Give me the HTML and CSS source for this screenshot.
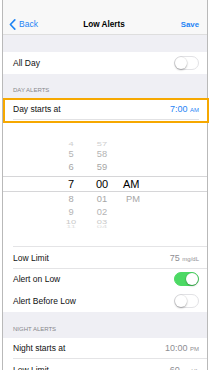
FILE: index.html
```html
<!DOCTYPE html>
<html>
<head>
<meta charset="utf-8">
<link rel="stylesheet" href="styles.css">
</head>
<body>
<div class="screen">
  <div class="nav">
    <div class="back">
      <svg class="chev" width="7" height="11" viewBox="0 0 7 11"><path d="M5.8 0.9 L1.4 5.5 L5.8 10.1" fill="none" stroke="#1f84f5" stroke-width="1.6" stroke-linecap="round" stroke-linejoin="round"/></svg>
      <span>Back</span>
    </div>
    <div class="title">Low Alerts</div>
    <div class="save">Save</div>
  </div>
  <div class="spacer"></div>
  <div class="row">
    <span>All Day</span>
    <span class="toggle"><span class="knob"></span></span>
  </div>
  <div class="section day">DAY ALERTS</div>
  <div class="row hl">
    <span>Day starts at</span>
    <span class="val blue">7:00 <span class="unit">AM</span></span>
  </div>
  <div class="picker">
    <div class="prow r4"><span>4</span><span>57</span><span></span></div>
    <div class="prow r5"><span>5</span><span>58</span><span></span></div>
    <div class="prow r6"><span>6</span><span>59</span><span></span></div>
    <div class="prow sel"><span>7</span><span>00</span><span class="ampm">AM</span></div>
    <div class="prow r8"><span>8</span><span>01</span><span class="ampm pm">PM</span></div>
    <div class="prow r9"><span>9</span><span>02</span><span></span></div>
    <div class="prow r10"><span>10</span><span>03</span><span></span></div>
    <div class="prow r11"><span>11</span><span>04</span><span></span></div>
  </div>
  <div class="group">
    <div class="line"></div>
    <div class="row h21">
      <span>Low Limit</span>
      <span class="val">75 <span class="unit">mg/dL</span></span>
    </div>
    <div class="line"></div>
    <div class="row h20">
      <span>Alert on Low</span>
      <span class="toggle on"><span class="knob"></span></span>
    </div>
    <div class="row h23">
      <span>Alert Before Low</span>
      <span class="toggle"><span class="knob"></span></span>
    </div>
  </div>
  <div class="section night">NIGHT ALERTS</div>
  <div class="group">
    <div class="row h20">
      <span>Night starts at</span>
      <span class="val">10:00 <span class="unit">PM</span></span>
    </div>
    <div class="line"></div>
    <div class="row">
      <span>Low Limit</span>
      <span class="val">60 <span class="unit">mg/dL</span></span>
    </div>
  </div>
</div>
</body>
</html>
```

FILE: styles.css
```css
html, body {
  margin: 0;
  padding: 0;
}
body {
  width: 211px;
  height: 370px;
  overflow: hidden;
  background: #fff;
  font-family: "Liberation Sans", Arial, sans-serif;
}
.screen {
  margin-left: 2px;
  width: 204px;
  height: 370px;
  border-left: 1px solid #b9b9b9;
  border-right: 1px solid #b9b9b9;
  background: #efeff4;
}
.nav {
  box-sizing: border-box;
  height: 35px;
  padding: 14px 8px 0 6px;
  background: #f8f8f8;
  border-bottom: 1px solid #dedede;
  display: grid;
  grid-template-columns: 1fr auto 1fr;
  align-items: center;
}
.back {
  display: flex;
  align-items: center;
  gap: 3px;
  color: #1f84f5;
  font-size: 8.5px;
}
.chev {
  display: block;
}
.title {
  font-weight: bold;
  font-size: 8.2px;
  color: #000;
}
.save {
  justify-self: end;
  font-weight: bold;
  font-size: 7.8px;
  color: #1f84f5;
}
.spacer {
  height: 17px;
}
.row {
  box-sizing: border-box;
  height: 22px;
  padding: 0 8px 0 10px;
  display: flex;
  align-items: center;
  justify-content: space-between;
  background: #fff;
  font-size: 8.5px;
  color: #111;
}
.row.h20 { height: 20px; }
.row.h21 { height: 21px; }
.row.h23 { height: 23px; }
.hl {
  position: relative;
}
.hl::before {
  content: "";
  position: absolute;
  left: 10px;
  right: 8px;
  bottom: 0;
  height: 1px;
  background: #e2e2e4;
}
.hl::after {
  content: "";
  position: absolute;
  left: 0;
  right: -2px;
  top: 0;
  bottom: -3px;
  border: 2px solid #f6a800;
}
.section {
  box-sizing: border-box;
  display: flex;
  align-items: flex-end;
  padding: 0 10px 4px;
  font-size: 6px;
  line-height: 8px;
  color: #86868b;
}
.section.day { height: 24px; }
.section.night { height: 26px; padding-bottom: 5px; }
.val {
  color: #8e8e93;
  font-size: 9px;
}
.val.blue {
  color: #1f84f5;
}
.unit {
  font-size: 6px;
}
.toggle {
  box-sizing: border-box;
  width: 25px;
  height: 14px;
  border-radius: 7px;
  border: 1px solid #e2e2e5;
  background: #fff;
  display: flex;
  align-items: center;
  justify-content: flex-start;
}
.toggle .knob {
  width: 12px;
  height: 12px;
  border-radius: 50%;
  background: #fff;
  box-shadow: 0 1px 2px rgba(0, 0, 0, 0.3), 0 0 0 0.5px rgba(0, 0, 0, 0.08);
}
.toggle.on {
  background: #4cd964;
  border-color: #4cd964;
  justify-content: flex-end;
}
.picker {
  background: #fff;
  padding: 19px 0 17px;
}
.prow {
  display: grid;
  grid-template-columns: 26px 36px 24px;
  padding-left: 55px;
  align-items: center;
  text-align: center;
  color: #a6a6a6;
  font-size: 9.3px;
}
.prow span {
  display: block;
}
.r4 { height: 10px; color: #cfcfcf; }
.r4 span { transform: scaleY(0.5); }
.r5 { height: 10px; color: #b4b4b4; }
.r5 span { transform: scaleY(0.9); }
.r6 { height: 17px; padding-bottom: 2px; box-sizing: border-box; }
.sel {
  height: 16px;
  box-sizing: border-box;
  border-top: 1px solid #d6d6d8;
  border-bottom: 1px solid #d6d6d8;
  color: #000;
  font-size: 11px;
}
.ampm {
  text-align: left;
  padding-left: 3px;
}
.pm {
  padding-left: 6px;
}
.r8 { height: 14px; }
.r9 { height: 11px; color: #b4b4b4; }
.r9 span { transform: scaleY(0.88); }
.r10 { height: 8px; color: #c8c8c8; }
.r10 span { transform: scaleY(0.65); }
.r11 { height: 4px; color: #dedede; overflow: hidden; }
.r11 span { transform: scaleY(0.3); line-height: 4px; }
.group {
  background: #fff;
}
.line {
  height: 1px;
  margin-left: 10px;
  background: #e4e4e6;
}
```
